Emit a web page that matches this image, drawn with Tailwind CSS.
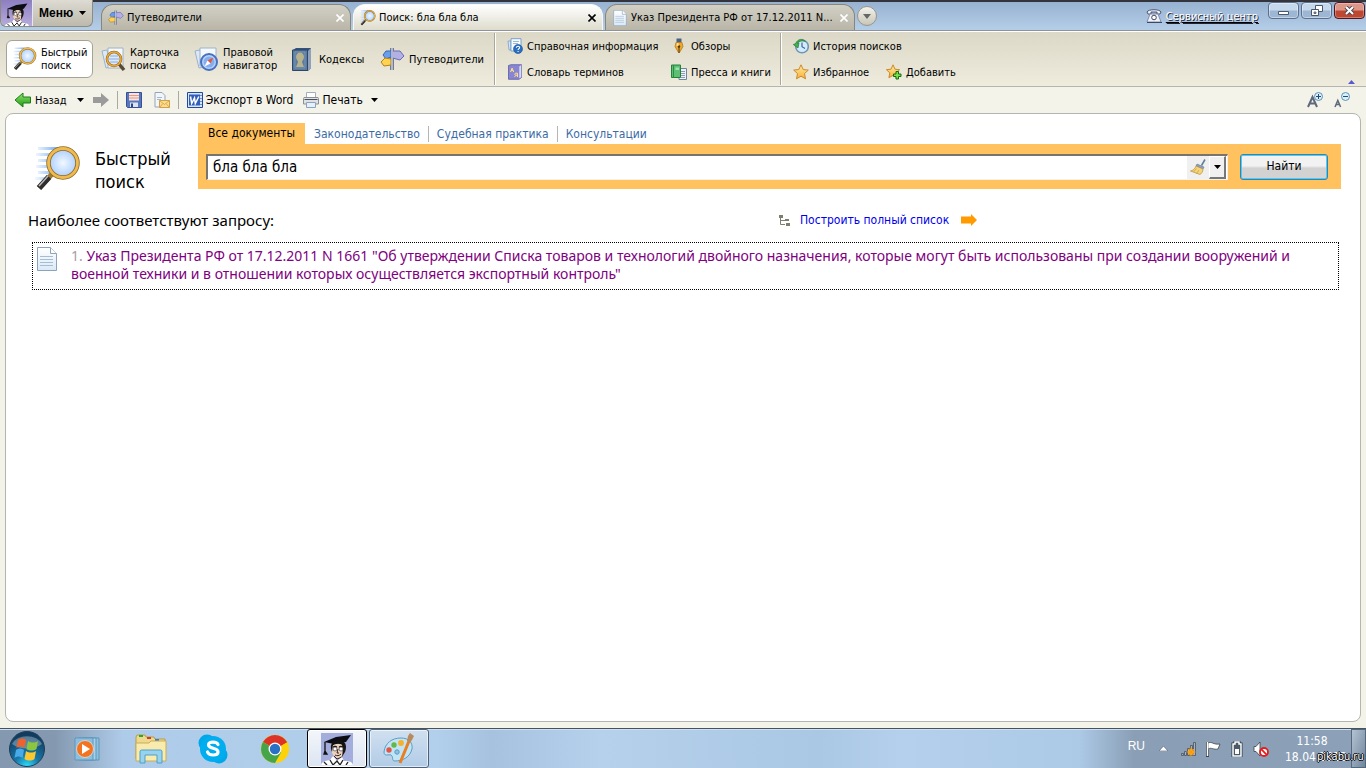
<!DOCTYPE html>
<html lang="ru">

<head>
    <meta charset="UTF-8">
    <meta name="viewport" content="width=device-width, initial-scale=1">
    <title>Поиск: бла бла бла</title>
    <script src="https://cdn.jsdelivr.net/npm/@tailwindcss/browser@4"></script>
</head>

<body class="flex min-h-screen flex-col bg-[#f4f3ea] font-['DejaVu_Sans_Condensed','Noto_Sans',sans-serif] text-[11px] leading-[13px] text-black">
    <!-- Icon sprite -->
    <svg class="absolute h-0 w-0" xmlns="http://www.w3.org/2000/svg">
        <defs>
            <linearGradient id="g-star" x1="0" y1="0" x2="0" y2="1">
                <stop offset="0" stop-color="#ffeaa6" />
                <stop offset="1" stop-color="#f9b233" />
            </linearGradient>
            <linearGradient id="g-green" x1="0" y1="0" x2="0" y2="1">
                <stop offset="0" stop-color="#8fe36f" />
                <stop offset="1" stop-color="#1f9a12" />
            </linearGradient>
            <radialGradient id="g-lens">
                <stop offset="0" stop-color="#f2f8ff" />
                <stop offset="1" stop-color="#a9ceff" />
            </radialGradient>
            <radialGradient id="g-orb" cx=".5" cy="1" r=".9">
                <stop offset="0" stop-color="#2fe0ff" />
                <stop offset=".4" stop-color="#1777a8" />
                <stop offset="1" stop-color="#123c5f" />
            </radialGradient>
            <linearGradient id="g-page" x1="0" y1="0" x2="0" y2="1">
                <stop offset="0" stop-color="#ffffff" />
                <stop offset="1" stop-color="#dbe9f7" />
            </linearGradient>
            <linearGradient id="g-fade" x1="0" y1="0" x2="1" y2="0">
                <stop offset="0" stop-color="#8dbcf5" stop-opacity=".1" />
                <stop offset="1" stop-color="#6fabf5" />
            </linearGradient>
        </defs>
        <symbol id="i-lens" viewBox="0 0 46 46">
            <path d="M3 1h20v3H3zM1 7h16v3H1zM3 13h11v3H3zM1 19h13v3H1zM3 25h13v3H3zM0 31h14v3H0z" fill="url(#g-fade)" />
            <path d="M18 27 4 42" stroke="#a07a35" stroke-width="5" />
            <path d="M14 31 4 42" stroke="#2e2e2e" stroke-width="6" />
            <path d="m13 30-9 10" stroke="#bbb" stroke-width="1.5" />
            <circle cx="28" cy="17" r="14.500" fill="url(#g-lens)" stroke="#8f6a2a" stroke-width="4.500" />
            <circle cx="28" cy="17" r="14.500" fill="none" stroke="#f0bb4e" stroke-width="2.800" />
        </symbol>
        <symbol id="i-page" viewBox="0 0 20 24">
            <path d="M.5.500h13l6 6v17H.5z" fill="url(#g-page)" stroke="#8ba3bd" />
            <path d="M13.500.500v6h6" fill="#fff" stroke="#8ba3bd" />
            <path d="M3 9.500h13M3 12.500h13M3 15.500h13M3 18.500h13" stroke="#a6bcd6" />
        </symbol>
        <symbol id="i-card" viewBox="0 0 25 25">
            <path d="m1 4 5-1 4 17-5 1z" fill="#dce8f6" stroke="#9bb2cc" />
            <path d="M7 1h15v20H7z" fill="#f5f9fd" stroke="#9bb2cc" />
            <path d="m18 17 5 6" stroke="#5a4a33" stroke-width="3.500" />
            <circle cx="13" cy="12" r="7" fill="#dce9fa" stroke="#8f5f12" stroke-width="2.600" />
            <circle cx="13" cy="12" r="7" fill="none" stroke="#edab36" stroke-width="1.600" />
            <path d="M9 9h8M8 12h10M9 15h8" stroke="#86aee0" />
        </symbol>
        <symbol id="i-compass" viewBox="0 0 25 25">
            <path d="m1 4 5-1 4 17-5 1z" fill="#dce8f6" stroke="#9bb2cc" />
            <path d="M6 1h16v18H6z" fill="#f5f9fd" stroke="#9bb2cc" />
            <circle cx="15" cy="15" r="8" fill="#b8d2fb" stroke="#4970bd" stroke-width="2" />
            <circle cx="15" cy="15" r="5.500" fill="#85aef0" />
            <path d="m19.500 10.500-3 6-3-3z" fill="#e25a3c" />
            <path d="m10.500 19.500 3-6 3 3z" fill="#fff" />
        </symbol>
        <symbol id="i-codex" viewBox="0 0 22 25">
            <path d="m2 3 3-2h15v20l-3 3H2z" fill="#35527b" />
            <path d="m17 4 3-3v20l-3 3z" fill="#8fa2b8" />
            <path d="M1.500 3h15v20.500h-15z" fill="#5b7b9f" stroke="#2c476b" />
            <path d="M4 5h10v16H4z" fill="none" stroke="#7f9ab8" stroke-width=".8" />
            <path d="M5 10c0-6 8-6 8 0 0 2-2 4-2 5l2 5H5l2-5c0-1-2-3-2-5z" fill="#b7b38c" />
        </symbol>
        <symbol id="i-guide" viewBox="0 0 25 25">
            <path d="M12 1v22" stroke="#737b8c" stroke-width="4" />
            <path d="M3 8 6 4h5v6l-5 2z" fill="#6a9dec" stroke="#3866b5" />
            <path d="M12.500 4H20l4 5-4 4-7.500-2z" fill="#b3b0e5" stroke="#6c68b1" />
            <path d="m1 15 4-4 6 1v6l-7 1z" fill="#ffd24f" stroke="#b5811b" />
            <path d="M12 1v22" stroke="#c9cfdb" stroke-width="1.500" />
        </symbol>
        <symbol id="i-help" viewBox="0 0 16 16">
            <path d="M1 3h3v9H2z" fill="#d2e3f5" stroke="#7ba0ca" stroke-width=".8" />
            <path d="M4 .7h10V13H4z" fill="#f7fbff" stroke="#6f97c5" stroke-width=".9" />
            <path d="M6 3.500h6M6 5.500h5" stroke="#9dbada" />
            <circle cx="11" cy="11" r="4.500" fill="#2a6fc2" stroke="#174f99" stroke-width=".6" />
            <path d="M9.400 9.800c0-2.200 3.400-2 3.200 0-.1 1-1.500 1-1.500 2.100m0 1v1" fill="none" stroke="#fff" stroke-width="1.100" />
        </symbol>
        <symbol id="i-dict" viewBox="0 0 16 16">
            <path d="M1.500 1.500 4 .7h10.500v12.800L12 15.300H1.500z" fill="#8886d2" stroke="#5c5ba6" stroke-width=".8" />
            <path d="m12.300 2.500 2-1.500v12l-2 1.500z" fill="#dadaf3" />
            <path d="m3.500 8 1.600-4 1.600 4M4 6.600h2.200M10.500 13V9.200H8.800a1 1 0 0 0 0 2h1.700m-1.600.2L7.500 13" fill="none" stroke="#ffdc8a" />
        </symbol>
        <symbol id="i-pen" viewBox="0 0 16 16">
            <path d="M5.500.500h5v4h-5z" fill="#4d6280" />
            <path d="M5 4.500h6l1 4-3.500 6h-1L4 8.500z" fill="#efa82b" stroke="#b67a1d" stroke-width=".8" />
            <path d="M8 9v6" stroke="#4f360d" />
            <circle cx="8" cy="8.500" r="1.200" fill="#4f360d" />
            <path d="M6 5h1.500v3h-2z" fill="#ffe2a0" />
        </symbol>
        <symbol id="i-press" viewBox="0 0 16 16">
            <path d="M8 4.500h7.500v11H8z" fill="#eef1f5" stroke="#71849b" />
            <path d="M10 7.500h4M10 9.500h4M10 11.500h4M10 13.500h4" stroke="#8b9db2" />
            <path d="M.5 1h9v12.500h-9z" fill="#5cbf73" stroke="#24813c" />
            <path d="M2.500 1v12.500" stroke="#2b8e44" />
            <path d="M4.500 3.500H8V6H4.500z" fill="#9fe0ad" />
        </symbol>
        <symbol id="i-history" viewBox="0 0 16 16">
            <circle cx="9" cy="8.500" r="6.300" fill="#d4ebff" stroke="#6f96b4" stroke-width="1.600" />
            <path d="M9 4.500v4.200l3 1.800" fill="none" stroke="#3d6a91" stroke-width="1.200" />
            <path d="M.3 6.500 5 10l1-5.200-1.700.4C6 3 9 2.300 12.500 3.300 10 .3 4.500.6 2.600 5.700z" fill="#43b34b" stroke="#227a31" stroke-width=".7" />
        </symbol>
        <symbol id="i-star" viewBox="0 0 16 16">
            <path d="m8 .8 2.200 4.700 5.100.6-3.800 3.500 1 5.200L8 12.200l-4.500 2.600 1-5.200L.7 6.100l5.100-.6z" fill="url(#g-star)" stroke="#c98a2b" stroke-linejoin="round" />
        </symbol>
        <symbol id="i-star-add" viewBox="0 0 16 16">
            <path d="m7 .8 2 4.400 4.600.5-3.400 3.200.9 4.800L7 11.400l-4.100 2.300.9-4.800L.4 5.700 5 5.200z" fill="url(#g-star)" stroke="#c98a2b" stroke-linejoin="round" />
            <path d="M10 7.500h2.500V10H15v2.500h-2.500V15H10v-2.500H7.500V10H10z" fill="#7be04f" stroke="#126b0c" />
        </symbol>
        <symbol id="i-back" viewBox="0 0 18 16">
            <path d="M1 8 9 1v4h7.500v6H9v4z" fill="url(#g-green)" stroke="#1c7d14" stroke-linejoin="round" />
        </symbol>
        <symbol id="i-save" viewBox="0 0 16 16">
            <path d="M.5.500h15v15h-14l-1-1z" fill="#5877bd" stroke="#34529a" />
            <path d="M3 1h10v7.500H3z" fill="#fbe3db" />
            <path d="M3 3.500h10M3 6h10" stroke="#e19a86" />
            <path d="M4 10.500h8V15H4z" fill="#dce3ef" />
            <path d="M5 11.500h2V15H5z" fill="#2a478d" />
        </symbol>
        <symbol id="i-mail" viewBox="0 0 16 16">
            <path d="M1 .5h7l3 3V15H1z" fill="#f2f6fb" stroke="#93a4b9" />
            <path d="M3 5.500h5M3 7.500h4" stroke="#a8b8cb" />
            <path d="M5.500 8.500h10v7h-10z" fill="#fbdd8c" stroke="#d2a04a" />
            <path d="m5.500 8.500 5 4 5-4M5.500 15.500l3.500-4M15.500 15.500l-3.500-4" fill="none" stroke="#d2a04a" stroke-width=".8" />
        </symbol>
        <symbol id="i-word" viewBox="0 0 16 16">
            <path d="M.5.500h15v15H.5z" fill="#d9e5fa" stroke="#21499c" />
            <path d="M12 3.500h3M12 6.500h3M12 9.500h3M12 12.500h3" stroke="#6f91d1" />
            <path d="M2 2.500h11v11H2z" fill="#2f5fb9" />
            <path d="m3.500 4.500 1.200 7L7.500 6l.8 5.500 3.500-7" fill="none" stroke="#fff" stroke-width="1.500" />
        </symbol>
        <symbol id="i-print" viewBox="0 0 16 16">
            <path d="M3.500.500h9v6h-9z" fill="#fff" stroke="#a3aebc" />
            <path d="M1 5.500h14l.5 1V12H.5V6.500z" fill="#dfe1e4" stroke="#8b9097" />
            <path d="M1.500 7.500h13" stroke="#494f58" />
            <path d="M3.500 10.500h9v5h-9z" fill="#e4f0fc" stroke="#8ca3be" />
        </symbol>
        <symbol id="i-prof" viewBox="0 0 32 32">
            <path d="M11 10c-2 4-1 8 1 12l5 4 5-4c3-5 2-9 1-13z" fill="#ecd3be" />
            <path d="M21 8c4 1 5 6 3 11l-3 5c1-6 1-10-1-15z" fill="#191514" />
            <path d="M11 10c-2 3-1 7 0 9l1-8z" fill="#191514" />
            <path d="M3 9 15 4l15-2-5 7-12 2z" fill="#0c0c14" />
            <path d="M11 9c4-3 9-3 12 0v4c-4-3-8-3-12 0z" fill="#111" />
            <path d="M4 9v9l-1 3h3l-2-3" fill="#111" stroke="#111" stroke-width="1.300" />
            <path d="M12 14.500c1-1.500 3-1.500 4 0m2 0c1-1.500 3-1.500 4 0" fill="none" stroke="#111" stroke-width="1.300" />
            <circle cx="14" cy="16" r="2" fill="#fff" stroke="#444" stroke-width=".7" />
            <circle cx="20" cy="16" r="2" fill="#fff" stroke="#444" stroke-width=".7" />
            <path d="m17 16-1 4h2M14 22c2 1 4 1 6-1M13 23l3 3 5-2" fill="none" stroke="#3a221a" />
            <path d="M0 32c1-4 5-4 9-5l3-4 4 5 5-4 2 4c4 0 8 0 9 4z" fill="#fff" />
            <path d="m9 27 3 5 4-4 3 4 3-5M3 29l3 3M27 29l-2 3" fill="none" stroke="#222" stroke-width="1.300" />
        </symbol>
    </svg>

    <!-- Title bar with tabs -->
    <header class="flex h-[31px] items-start border-t-2 border-b border-t-[#34343c] border-b-[#8f9398] bg-linear-to-b from-[#97b2d1] to-[#b5cee8]">
        <button class="-mt-0.5 mr-2 flex h-[27px] w-[93px] items-center rounded-b-md border border-t-0 border-[#8e8b80] bg-linear-to-b from-[#dddbd2] to-[#bdbaac] font-['Liberation_Sans',sans-serif] text-[12px] font-bold">
            <span class="mr-1.5 flex h-full w-8 items-end justify-center rounded-bl-md border-r border-[#e8e6f5] bg-linear-to-b from-[#8d7fc0] to-[#b7abdc]">
                <svg class="h-6 w-6"><use href="#i-prof" /></svg>
            </span>
            Меню
            <svg class="ml-1.5 h-1 w-[7px]" viewBox="0 0 7 4"><path d="M0 0h7L3.500 4z" /></svg>
        </button>
        <nav class="mt-0.5 flex h-[26px] gap-0.5">
            <div class="flex w-[250px] items-center rounded-t-xl border border-b-0 border-[#87857c] bg-linear-to-b from-[#d2cfc5] to-[#b9b6a8] px-1.5">
                <svg class="mr-[3px] h-4 w-4"><use href="#i-guide" /></svg>
                <a href="#" class="flex-1 truncate">Путеводители</a>
                <button aria-label="Закрыть"><svg class="h-2 w-2" viewBox="0 0 8 8"><path d="m.5.500 7 7m0-7-7 7" stroke="#fff" stroke-width="1.600" /></svg></button>
            </div>
            <div class="flex w-[250px] items-center rounded-t-xl border border-b-0 border-[#f9f9f4] bg-linear-to-b from-white to-[#dedccd] px-1.5">
                <svg class="mr-[3px] h-4 w-4"><use href="#i-lens" /></svg>
                <a href="#" class="flex-1 truncate">Поиск: бла бла бла</a>
                <button aria-label="Закрыть"><svg class="h-2 w-2" viewBox="0 0 8 8"><path d="m.5.500 7 7m0-7-7 7" stroke="#000" stroke-width="1.600" /></svg></button>
            </div>
            <div class="flex w-[250px] items-center rounded-t-xl border border-b-0 border-[#87857c] bg-linear-to-b from-[#d2cfc5] to-[#b9b6a8] px-1.5">
                <svg class="mr-[3px] h-4 w-4"><use href="#i-page" /></svg>
                <a href="#" class="flex-1 truncate">Указ Президента РФ от 17.12.2011 N...</a>
                <button aria-label="Закрыть"><svg class="h-2 w-2" viewBox="0 0 8 8"><path d="m.5.500 7 7m0-7-7 7" stroke="#fff" stroke-width="1.600" /></svg></button>
            </div>
        </nav>
        <button aria-label="Список вкладок" class="mt-1 ml-0.5 flex h-5 w-5 items-center justify-center rounded-full border border-[#98968c] bg-linear-to-b from-[#f3f2ec] to-[#c9c6b8]">
            <svg class="h-[5px] w-2" viewBox="0 0 8 5"><path d="M0 0h8L4 5z" fill="#666" /></svg>
        </button>
        <a href="#" class="mt-1.5 ml-auto flex items-center gap-1 text-white underline decoration-black underline-offset-2 [text-shadow:1px_1px_0_#223]">
            <svg class="h-4 w-4" viewBox="0 0 16 16">
                <path d="M1 4c1-3 13-3 14 0l-1 2h-3V4H5v2H2z" fill="#eef2fb" stroke="#3d4664" stroke-width=".9" />
                <path d="M4 6h8l3 8H1z" fill="#eef2fb" stroke="#7c84a0" stroke-width=".9" />
                <path d="M1 14.500h15" stroke="#3d4664" />
                <circle cx="8" cy="9.500" r="2.300" fill="#fff" stroke="#3d4664" />
            </svg>
            Сервисный центр
        </a>
        <div class="mr-px ml-2.5 flex gap-0.5">
            <button aria-label="Свернуть" class="flex h-[17px] w-[31px] items-center justify-center rounded-sm border border-[#59718f] bg-linear-to-b from-[#c5d8ec] from-45% to-[#9cb6d3] to-55% inset-ring inset-ring-white/40">
                <svg class="mt-1 h-1 w-[11px]" viewBox="0 0 11 4"><path d="M.5.500h10v3H.5z" fill="#fff" stroke="#49566b" /></svg>
            </button>
            <button aria-label="Развернуть" class="flex h-[17px] w-[31px] items-center justify-center rounded-sm border border-[#59718f] bg-linear-to-b from-[#c5d8ec] from-45% to-[#9cb6d3] to-55% inset-ring inset-ring-white/40">
                <svg class="h-[11px] w-3" viewBox="0 0 12 11">
                    <path d="M4.500.500h7v6h-7z" fill="#fff" stroke="#49566b" />
                    <path d="M.5 4.500h7v6h-7z" fill="#fff" stroke="#49566b" />
                    <path d="M3 7h2v1.500H3z" fill="#9cb6d3" stroke="#49566b" stroke-width=".8" />
                </svg>
            </button>
            <button aria-label="Закрыть" class="flex h-[17px] w-[31px] items-center justify-center rounded-sm border border-[#4f1722] bg-linear-to-b from-[#dd9789] from-45% to-[#bd4730] to-55% inset-ring inset-ring-white/30">
                <svg class="h-[9px] w-[11px]" viewBox="0 0 11 9">
                    <path d="m2 1 7 7m0-7L2 8" stroke="#4a4a55" stroke-width="4" />
                    <path d="m2 1 7 7m0-7L2 8" stroke="#fff" stroke-width="2" />
                </svg>
            </button>
        </div>
    </header>

    <!-- Ribbon -->
    <section class="flex h-14 items-center border-t border-b border-t-white border-b-[#b4b4b0] bg-linear-to-b from-[#dbd8c7] to-[#efecde] pl-1.5">
        <button class="mr-2 flex h-[38px] w-[87px] items-center gap-1 rounded-md border border-[#a5a397] bg-white pl-1.5 text-left">
            <svg class="h-6 w-6 shrink-0"><use href="#i-lens" /></svg><span>Быстрый<br>поиск</span>
        </button>
        <button class="flex w-[93px] items-center gap-1 text-left">
            <svg class="h-[25px] w-[25px] shrink-0"><use href="#i-card" /></svg><span>Карточка<br>поиска</span>
        </button>
        <button class="flex w-[97px] items-center gap-1 text-left">
            <svg class="h-[25px] w-[25px] shrink-0"><use href="#i-compass" /></svg><span>Правовой<br>навигатор</span>
        </button>
        <button class="flex w-[89px] items-center gap-1.5 text-left">
            <svg class="h-[25px] w-[22px] shrink-0"><use href="#i-codex" /></svg>Кодексы
        </button>
        <button class="flex w-[114px] items-center gap-1 text-left">
            <svg class="h-[25px] w-[25px] shrink-0"><use href="#i-guide" /></svg>Путеводители
        </button>
        <div class="grid h-[52px] w-[286px] grid-cols-[164px_1fr] items-center border-l border-[#a9a798] pl-3 shadow-[inset_1px_0_0_#fff]">
            <button class="flex items-center gap-1"><svg class="h-4 w-4"><use href="#i-help" /></svg>Справочная информация</button>
            <button class="flex items-center gap-1"><svg class="h-4 w-4"><use href="#i-pen" /></svg>Обзоры</button>
            <button class="flex items-center gap-1"><svg class="h-4 w-4"><use href="#i-dict" /></svg>Словарь терминов</button>
            <button class="flex items-center gap-1"><svg class="h-4 w-4"><use href="#i-press" /></svg>Пресса и книги</button>
        </div>
        <div class="grid h-[52px] grid-cols-[93px_1fr] items-center border-l border-[#a9a798] pl-3 shadow-[inset_1px_0_0_#fff]">
            <button class="col-span-2 flex items-center gap-1"><svg class="h-4 w-4"><use href="#i-history" /></svg>История поисков</button>
            <button class="flex items-center gap-1"><svg class="h-4 w-4"><use href="#i-star" /></svg>Избранное</button>
            <button class="flex items-center gap-1"><svg class="h-4 w-4"><use href="#i-star-add" /></svg>Добавить</button>
        </div>
        <button aria-label="Свернуть панель" class="mr-[11px] mb-0.5 ml-auto self-end"><svg class="h-1 w-[7px]" viewBox="0 0 7 4"><path d="M3.500 0 7 4H0z" fill="#5959cf" /></svg></button>
    </section>

    <!-- Toolbar -->
    <section class="flex h-[26px] items-center pr-4 pl-3.5">
        <button class="flex items-center gap-[3px]"><svg class="h-4 w-[18px]"><use href="#i-back" /></svg>Назад</button>
        <svg class="ml-2.5 h-1 w-[7px]" viewBox="0 0 7 4"><path d="M0 0h7L3.500 4z" /></svg>
        <button aria-label="Вперёд" class="ml-[9px]"><svg class="h-4 w-4" viewBox="0 0 16 16"><path d="M0 5h8V1l8 7-8 7v-4H0z" fill="#9b9b9b" /></svg></button>
        <span class="mx-2 h-[18px] w-px bg-[#aaa99f]"></span>
        <button aria-label="Сохранить"><svg class="h-4 w-4"><use href="#i-save" /></svg></button>
        <button aria-label="Отправить" class="ml-3"><svg class="h-4 w-4"><use href="#i-mail" /></svg></button>
        <span class="mx-2 h-[18px] w-px bg-[#aaa99f]"></span>
        <button class="flex items-center gap-[3px] text-[12px]"><svg class="h-4 w-4"><use href="#i-word" /></svg>Экспорт в Word</button>
        <button class="ml-2.5 flex items-center gap-[3px] text-[12px]"><svg class="h-4 w-4"><use href="#i-print" /></svg>Печать</button>
        <svg class="ml-2 h-1 w-[7px]" viewBox="0 0 7 4"><path d="M0 0h7L3.500 4z" /></svg>
        <button aria-label="Увеличить шрифт" class="ml-auto">
            <svg class="h-4 w-4" viewBox="0 0 16 16">
                <path d="m1 15 4.500-10L10 15M2.500 11.500h6" fill="none" stroke="#5c6a7c" stroke-width="2" />
                <circle cx="11.500" cy="4.500" r="4" fill="#d9effb" stroke="#5f92b8" />
                <path d="M9 4.500h5M11.500 2v5" stroke="#244b70" />
            </svg>
        </button>
        <button aria-label="Уменьшить шрифт" class="ml-[11px]">
            <svg class="h-4 w-4" viewBox="0 0 16 16">
                <path d="m1 15 2.800-6.500L6.600 15M2 12.500h4" fill="none" stroke="#5c6a7c" stroke-width="1.500" />
                <circle cx="11.500" cy="4.500" r="4" fill="#d9effb" stroke="#5f92b8" />
                <path d="M9 4.500h5" stroke="#244b70" />
            </svg>
        </button>
    </section>

    <!-- Content -->
    <main class="mx-[5px] mb-1.5 flex-1 rounded-lg border border-[#b4b4b0] bg-white pr-[19px] pl-[22px]">
        <div class="flex pt-[9px]">
            <svg class="mt-[23px] ml-[7px] h-[46px] w-[46px]"><use href="#i-lens" /></svg>
            <h1 class="mt-6 ml-3.5 w-[103px] text-[18px] leading-[23px]">Быстрый поиск</h1>
            <div class="flex-1">
                <nav class="flex h-[21px] items-center text-[12px] text-[#3b6ba5]">
                    <a href="#" class="mr-px flex h-full items-center bg-[#ffc25e] px-2.5 text-black">Все документы</a>
                    <a href="#" class="border-r border-[#b5b5b5] px-2 leading-4">Законодательство</a>
                    <a href="#" class="border-r border-[#b5b5b5] px-2 leading-4">Судебная практика</a>
                    <a href="#" class="px-2 leading-4">Консультации</a>
                </nav>
                <form class="flex h-[45px] items-center gap-3 bg-[#ffc25e] pr-[13px] pl-2" onsubmit="return false">
                    <div class="flex h-[26px] flex-1 border-t-2 border-r border-b border-l-2 border-t-[#77756d] border-r-[#f4f2ea] border-b-[#f4f2ea] border-l-[#77756d] bg-white pr-px">
                        <input type="text" value="бла бла бла" aria-label="Запрос" class="min-w-0 flex-1 px-[5px] text-[15px] outline-none">
                        <button type="button" aria-label="Очистить" class="flex w-[22px] items-center justify-center bg-[#f0f0f0]">
                            <svg class="h-4 w-4" viewBox="0 0 16 16">
                                <path d="m15 .5-3.500 6" stroke="#5f7c9d" stroke-width="1.500" />
                                <path d="m7 5 7 3-1 2-7-3z" fill="#87a1bf" stroke="#5f7c9d" stroke-width=".6" />
                                <path d="m6 7 7 3c0 3-2 5-3 5.500L.5 12C3 11.500 5 10 6 7z" fill="#f5d47c" stroke="#b98c33" stroke-width=".7" />
                                <path d="m6.500 9.500-3 3.500m5.500-2-2.500 3.500" stroke="#c99c40" stroke-width=".7" />
                            </svg>
                        </button>
                        <button type="button" aria-label="Показать запросы" class="flex w-[17px] items-center justify-center border-t border-r-2 border-b-2 border-l border-t-white border-r-[#777] border-b-[#777] border-l-white bg-[#f0f0f0]">
                            <svg class="h-1 w-[7px]" viewBox="0 0 7 4"><path d="M0 0h7L3.500 4z" /></svg>
                        </button>
                    </div>
                    <button class="h-[26px] w-[88px] rounded-[3px] border border-[#3c7fb1] bg-linear-to-b from-[#f2f2f2] from-45% to-[#d2d2d2] to-55% text-[12px] inset-ring inset-ring-[#46d0f5]">Найти</button>
                </form>
            </div>
        </div>

        <div class="mt-[17px] flex items-center">
            <h2 class="w-[751px] font-['Noto_Sans',sans-serif] text-[15px] leading-5">Наиболее соответствуют запросу:</h2>
            <a href="#" class="flex items-center text-[12px] text-[#0000ee]">
                <svg class="mr-2.5 h-[11px] w-[11px]" viewBox="0 0 11 11">
                    <path d="M1.500 2v7.500H6M1.500 5.500H6" fill="none" stroke="#7e7e6e" />
                    <path d="M0 0h4v3H0zM6 4h4v2H6zM7 8h4v3H7z" fill="#7e7e6e" />
                </svg>
                Построить полный список
                <svg class="ml-3 h-3 w-4" viewBox="0 0 16 12"><path d="M0 2.500h10V0l6 6-6 6V9.500H0z" fill="#ff9a00" /></svg>
            </a>
        </div>

        <article class="mt-3 mr-0.5 ml-1 flex h-12 border border-dotted border-black pt-1 pl-1">
            <svg class="mr-3.5 h-6 w-5 shrink-0"><use href="#i-page" /></svg>
            <a href="#" class="font-['Noto_Sans',sans-serif] text-[14px] leading-[18px] text-[#800080]"><span class="text-[#a89ca4]">1.</span> Указ Президента РФ от 17.12.2011 N 1661 "Об утверждении Списка товаров и технологий двойного назначения, которые могут быть использованы при создании вооружений и военной техники и в отношении которых осуществляется экспортный контроль"</a>
        </article>
    </main>

    <!-- Taskbar -->
    <footer class="flex h-10 items-stretch border-t border-[#45525f] bg-[linear-gradient(90deg,#8499b0_0%,#8499b0_4%,#aecbe9_9%,#b2cfeb_32%,#a6c2df_36%,#b5d1ec_44%,#aac7e3_60%,#b4d0ec_66%,#acc9e6_79%,#8a9fb6_83%,#8ca1b8_100%)] shadow-[inset_0_1px_0_#cfe0f0]">
        <button aria-label="Пуск" class="ml-2">
            <svg class="h-[38px] w-[38px]" viewBox="0 0 38 38">
                <circle cx="19" cy="19" r="17.500" fill="url(#g-orb)" stroke="#1f3d57" />
                <path d="M4 14a16 12 0 0 1 30 0c-8 6-22 6-30 0z" fill="#fff" opacity=".3" />
                <path d="M10 10c3-2 5-2 8 0l-1.500 8c-3-2-5-2-8 0z" fill="#f0622c" />
                <path d="M20 11c3 2 7 2 10 0l-1.500 8c-3 2-7 2-10 0z" fill="#8cc63f" />
                <path d="M8 20c3-2 5-2 8 0l-1.500 8c-3-2-5-2-8 0z" fill="#4aa9e8" />
                <path d="M18 21c3 2 7 2 10 0l-1.500 8c-3 2-7 2-10 0z" fill="#fdc82f" />
            </svg>
        </button>
        <button aria-label="Проигрыватель" class="ml-7 flex w-[30px] items-center">
            <svg class="h-[26px] w-[30px]" viewBox="0 0 30 26">
                <path d="M9 2h16v22H9z" fill="#8fc0de" stroke="#5c97bd" />
                <path d="M5 2h17v22H5z" fill="#a8d2ea" stroke="#5c97bd" />
                <path d="M1 2h18v22H1z" fill="#8cbfde" stroke="#5c97bd" />
                <circle cx="11" cy="13" r="8.500" fill="#f37321" stroke="#d4d4d4" />
                <path d="m8 8 8 5-8 5z" fill="#fff" />
            </svg>
        </button>
        <button aria-label="Проводник" class="ml-[31px] flex w-8 items-center">
            <svg class="h-[30px] w-8" viewBox="0 0 32 30">
                <path d="M1 3 2 1h8l1 2h8l1 2h10v20H1z" fill="#efd98d" stroke="#b99c47" />
                <path d="M4 1h4v2H4z" fill="#2aa82a" />
                <path d="M12 3h4v2h-4z" fill="#d13c28" />
                <path d="M20 5h4v2h-4z" fill="#2e82d8" />
                <path d="M1 9h13l2-2h15v20H1z" fill="#f9ebae" stroke="#c9ad5b" />
                <path d="M5 29V18c0-2 1-2 2-2h18c1 0 2 0 2 2v11h-5v-8H10v8z" fill="#98d3ee" stroke="#4f9fc8" />
            </svg>
        </button>
        <button aria-label="Skype" class="ml-[31px] flex w-[30px] items-center">
            <svg class="h-[30px] w-[30px]" viewBox="0 0 30 30">
                <circle cx="9" cy="9" r="8.500" fill="#00a8ea" />
                <circle cx="21" cy="21" r="8.500" fill="#00a8ea" />
                <circle cx="15" cy="15" r="13" fill="#00adef" />
                <path d="M20 10.500c-1-3-9.500-3.500-9.500.2 0 4.800 9.500 2.300 9.500 7.300 0 4-9 4-10.500 0" fill="none" stroke="#fff" stroke-width="3.200" stroke-linecap="round" />
            </svg>
        </button>
        <button aria-label="Chrome" class="ml-[33px] flex w-7 items-center">
            <svg class="h-7 w-7" viewBox="0 0 28 28">
                <circle cx="14" cy="14" r="14" fill="#fdd20a" />
                <path d="M14 14 1.900 7A14 14 0 0 1 26.100 7z" fill="#dd3326" />
                <path d="M26.100 7H14v7z" fill="#dd3326" />
                <path d="M1.900 7A14 14 0 0 0 14 28l6-10.500-6-3.500z" fill="#45a548" />
                <circle cx="14" cy="14" r="6.500" fill="#fff" />
                <circle cx="14" cy="14" r="5.200" fill="#2a70c4" />
            </svg>
        </button>
        <button aria-label="КонсультантПлюс" class="mr-0.5 ml-[18px] flex w-[60px] items-center justify-center rounded-[3px] border border-black bg-linear-to-b from-[#f3f6fa] to-[#dce5f3] inset-ring inset-ring-white">
            <span class="bg-[#a3aedd]"><svg class="h-8 w-8"><use href="#i-prof" /></svg></span>
        </button>
        <button aria-label="Paint" class="flex w-[60px] items-center justify-center rounded-[3px] border border-[#4f6175] bg-linear-to-b from-[#d0e0f0] to-[#b2cce6] inset-ring inset-ring-white/60">
            <svg class="h-8 w-8" viewBox="0 0 32 32">
                <path d="M1 19C2 10 9 5 18 5c8 0 12 5 11 11-2 8-9 12-17 12-4 0-1-4-4-6-2-1-7 2-7-3z" fill="#c2e4f5" stroke="#5a9cc4" />
                <circle cx="6" cy="17" r="2.700" fill="#e2564a" />
                <circle cx="11" cy="12" r="2.700" fill="#61b946" />
                <circle cx="18" cy="10" r="2.900" fill="#f6b02c" />
                <circle cx="14" cy="19" r="2.200" fill="#8fc3e4" stroke="#5a9cc4" />
                <path d="m26 8-9 22" stroke="#e87f22" stroke-width="3" />
                <path d="m24 8 1-5 2-3 4 3-2 4-2 3z" fill="#b98a5d" />
            </svg>
        </button>
        <div class="ml-auto flex items-center text-[12px] text-white">
            <span class="mr-3.5 mb-1 font-['Liberation_Sans',sans-serif]">RU</span>
            <svg class="mr-[13px] h-[5px] w-[9px]" viewBox="0 0 9 5"><path d="M4.500 0 9 5H0z" fill="#fff" stroke="#4d5a6b" stroke-width=".6" /></svg>
            <svg class="mr-2 h-4 w-4" viewBox="0 0 16 16">
                <path d="M.5 12.500h2v2h-2zM3.500 10.500h2v4h-2zM6.500 7.500h2v7h-2zM9.500 4.500h2v10h-2zM12.500 1.500h2v13h-2z" fill="#a9b4c0" stroke="#46525f" stroke-width=".8" />
                <circle cx="10" cy="11" r="3" fill="#ffb019" />
                <path d="M10 6.500v9M5.500 11h9M7 8l6 6M13 8l-6 6" stroke="#f79a10" />
            </svg>
            <svg class="mr-2.5 h-4 w-4" viewBox="0 0 16 16">
                <path d="M2.500 1v15" stroke="#39434f" stroke-width="3" />
                <path d="M3 2c4-2 5 2 12 1l-2 5c-5 1-6-2-10 0z" fill="#fff" stroke="#39434f" stroke-width=".8" />
                <path d="M2.500 1v14" stroke="#fff" stroke-width="1.500" />
            </svg>
            <svg class="mr-2.5 h-4 w-3" viewBox="0 0 12 16">
                <path d="M4 1h4v2h2v12H2V3h2z" fill="none" stroke="#2f3944" stroke-width="3" />
                <path d="M4 1h4v2h2v12H2V3h2z" fill="#4c5966" stroke="#fff" stroke-width="1.500" />
                <path d="M4 8h4v5H4z" fill="#fff" />
            </svg>
            <svg class="mr-4 h-4 w-4" viewBox="0 0 16 16">
                <path d="M1 5.500h2l4-4.500v14l-4-4.500H1z" fill="#fff" stroke="#39434f" stroke-width=".8" />
                <circle cx="11" cy="11" r="4" fill="#fff" stroke="#e01f1f" stroke-width="1.800" />
                <path d="m8.200 8.200 5.600 5.600" stroke="#e01f1f" stroke-width="1.800" />
            </svg>
            <div class="relative w-[54px] text-center leading-4">
                11:58<br>18.04.2013
                <span class="absolute top-4 left-8 text-[11px] leading-4 [text-shadow:1px_0_#000,-1px_0_#000,0_1px_#000,0_-1px_#000]">pikabu.ru</span>
            </div>
        </div>
        <button aria-label="Показать рабочий стол" class="ml-3 w-[15px] border border-[#54677c] bg-linear-to-br from-[#b3c3d3] to-[#71869c]"></button>
    </footer>
</body>

</html>
